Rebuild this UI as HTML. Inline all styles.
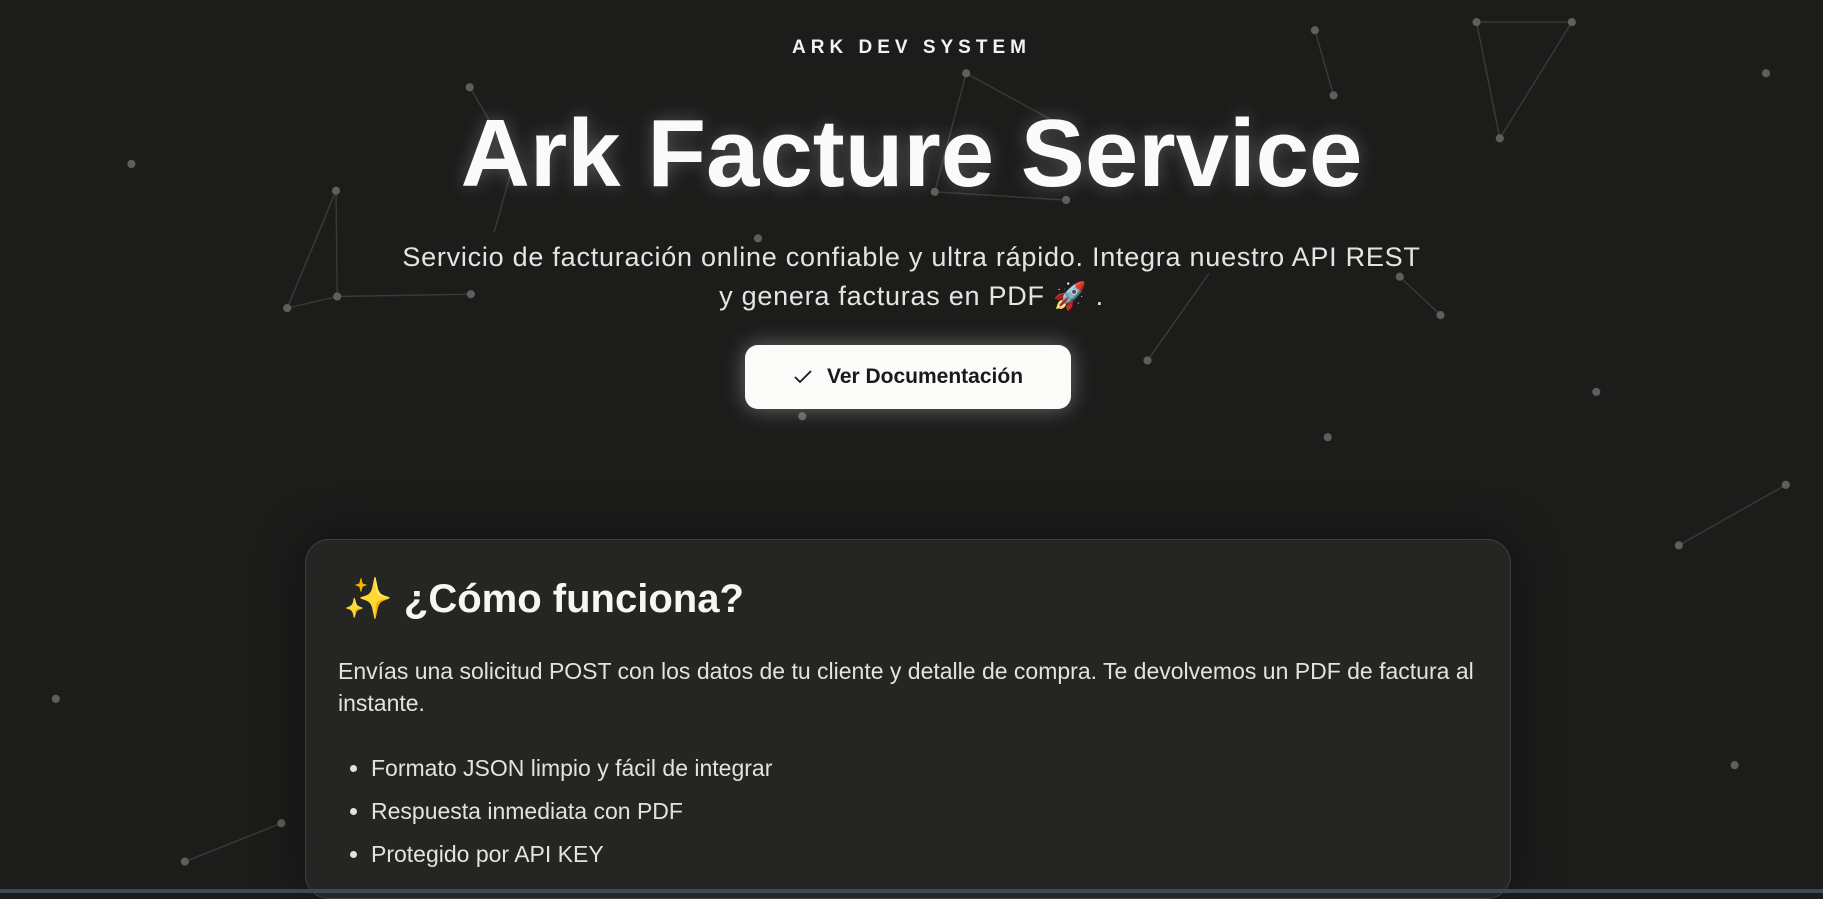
<!DOCTYPE html>
<html><head><meta charset="utf-8"><style>
html,body{margin:0;padding:0;}
body{width:1823px;height:893px;overflow:hidden;background:#1c1c1b;font-family:"Liberation Sans","Noto Sans CJK JP",sans-serif;color:#fff;position:relative;}
svg.bg{position:absolute;left:0;top:0;}
.logo{position:absolute;left:0;width:1823px;top:37px;text-align:center;font-size:19px;letter-spacing:5px;font-weight:bold;color:#f2f2f2;}
h1{position:absolute;left:0;width:1823px;top:99px;margin:0;text-align:center;font-size:96px;font-weight:bold;letter-spacing:0px;color:#fafafa;text-shadow:0 0 18px rgba(255,255,255,0.25);}
.sub{position:absolute;left:300px;width:1223px;top:238px;text-align:center;font-size:27px;letter-spacing:0.75px;line-height:39px;color:#e4e4e2;}
.btn{position:absolute;left:745px;top:345px;width:326px;height:64px;background:#fbfbf9;border-radius:13px;box-shadow:0 0 22px rgba(255,255,255,0.35);color:#1a1a1a;font-size:21px;font-weight:bold;display:flex;align-items:center;justify-content:center;gap:14px;}
.card{position:absolute;left:305px;top:539px;width:1206px;height:360px;box-sizing:border-box;background:#252523;border:1px solid rgba(255,255,255,0.12);border-radius:24px;box-shadow:0 0 50px rgba(0,0,0,0.45);}
.card h2{position:absolute;left:37px;top:35px;margin:0;font-size:40px;font-weight:bold;color:#f6f6f4;}
.card p{position:absolute;left:32px;top:115px;width:1160px;margin:0;font-size:23px;line-height:32px;color:#e2e2e0;}
.card ul{position:absolute;left:32px;top:207px;margin:0;padding:0 0 0 33px;font-size:23px;line-height:43px;color:#e2e2e0;}
.strip{position:absolute;left:0;top:889px;width:1823px;height:4px;background:#3f4856;}
</style></head><body>
<svg class="bg" width="1823" height="893" viewBox="0 0 1568 768" preserveAspectRatio="none">
<g stroke="#3a3a38" stroke-width="1.2" fill="none">
<line x1="404" y1="75" x2="442" y2="139"/><line x1="289" y1="164" x2="290" y2="255"/><line x1="247" y1="265" x2="290" y2="255"/><line x1="290" y1="255" x2="405" y2="253"/><line x1="247" y1="265" x2="289" y2="164"/>
<line x1="831" y1="63" x2="917" y2="110"/><line x1="831" y1="63" x2="804" y2="165"/><line x1="804" y1="165" x2="917" y2="172"/>
<line x1="1131" y1="26" x2="1147" y2="82"/><line x1="1270" y1="19" x2="1352" y2="19"/><line x1="1270" y1="19" x2="1290" y2="119"/><line x1="1352" y1="19" x2="1290" y2="119"/>
<line x1="1204" y1="238" x2="1239" y2="271"/><line x1="987" y1="310" x2="1040" y2="235"/><line x1="1444" y1="469" x2="1536" y2="417"/><line x1="242" y1="708" x2="159" y2="741"/><line x1="442" y1="139" x2="425" y2="200"/>
</g>
<g fill="#5e5e5c">
<circle cx="404" cy="75" r="3.5"/><circle cx="442" cy="139" r="3.5"/><circle cx="113" cy="141" r="3.5"/><circle cx="289" cy="164" r="3.5"/><circle cx="247" cy="265" r="3.5"/><circle cx="290" cy="255" r="3.5"/><circle cx="405" cy="253" r="3.5"/><circle cx="831" cy="63" r="3.5"/><circle cx="804" cy="165" r="3.5"/><circle cx="917" cy="172" r="3.5"/><circle cx="1131" cy="26" r="3.5"/><circle cx="1147" cy="82" r="3.5"/><circle cx="1270" cy="19" r="3.5"/><circle cx="1352" cy="19" r="3.5"/><circle cx="1290" cy="119" r="3.5"/><circle cx="1519" cy="63" r="3.5"/><circle cx="652" cy="205" r="3.5"/><circle cx="1204" cy="238" r="3.5"/><circle cx="1239" cy="271" r="3.5"/><circle cx="987" cy="310" r="3.5"/><circle cx="1373" cy="337" r="3.5"/><circle cx="1142" cy="376" r="3.5"/><circle cx="690" cy="358" r="3.5"/><circle cx="1536" cy="417" r="3.5"/><circle cx="1444" cy="469" r="3.5"/><circle cx="48" cy="601" r="3.5"/><circle cx="1492" cy="658" r="3.5"/><circle cx="242" cy="708" r="3.5"/><circle cx="159" cy="741" r="3.5"/>
</g>
</svg>
<div class="logo">ARK DEV SYSTEM</div>
<h1>Ark Facture Service</h1>
<div class="sub">Servicio de facturación online confiable y ultra rápido. Integra nuestro API REST<br>y genera facturas en PDF 🚀 .</div>
<div class="btn"><svg width="20" height="16" viewBox="0 0 20 16"><path d="M2 8 L7 13 L18 2" stroke="#1a1a1a" stroke-width="1.8" fill="none"/></svg><span>Ver Documentación</span></div>
<div class="card">
<h2>✨ ¿Cómo funciona?</h2>
<p>Envías una solicitud POST con los datos de tu cliente y detalle de compra. Te devolvemos un PDF de factura al instante.</p>
<ul><li>Formato JSON limpio y fácil de integrar</li><li>Respuesta inmediata con PDF</li><li>Protegido por API KEY</li></ul>
</div>
<div class="strip"></div>
</body></html>
